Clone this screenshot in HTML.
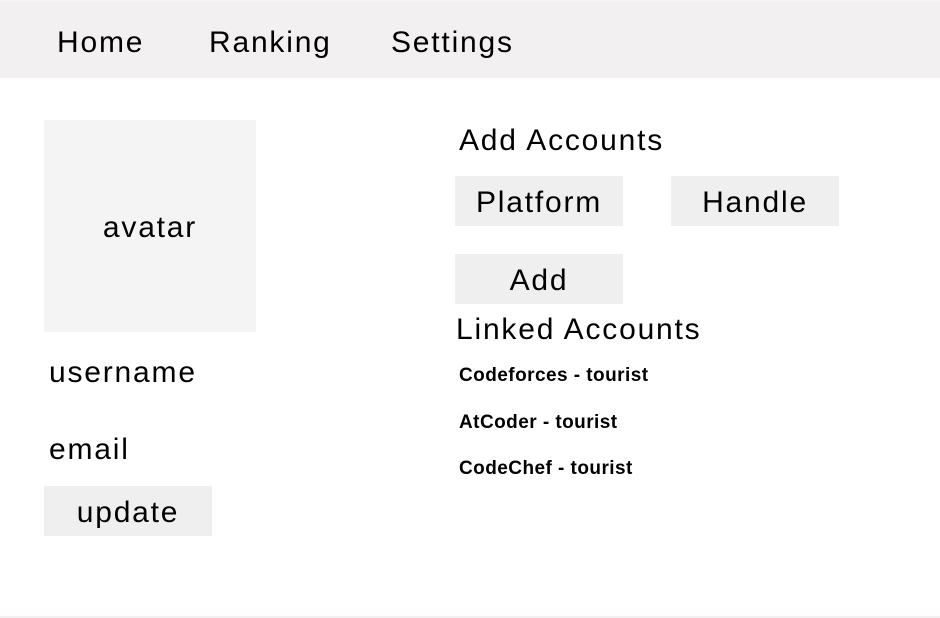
<!DOCTYPE html>
<html><head><style>
body{margin:0;width:940px;height:618px;background:#fff;position:relative;overflow:hidden;font-family:"Liberation Sans",sans-serif;color:#000}
.a{position:absolute;white-space:nowrap}
.nav{position:absolute;left:0;top:0;width:940px;height:78px;background:#f2f0f1;border-top:2px solid #f6f5f5;box-sizing:border-box}
.t{font-size:30px;line-height:36px;letter-spacing:1.8px}
.box{position:absolute;background:#f0efef;display:flex;align-items:center;justify-content:center;font-size:30px;letter-spacing:1.8px;padding-top:3px;box-sizing:border-box}
.s{font-size:19px;font-weight:bold;line-height:24px;letter-spacing:0.45px}
</style></head><body>
<div class="nav"></div>
<div class="a t" style="left:57px;top:25px">Home</div>
<div class="a t" style="left:209px;top:25px">Ranking</div>
<div class="a t" style="left:391px;top:25px">Settings</div>
<div class="box" style="left:44px;top:120px;width:212px;height:212px;background:#f5f4f4">avatar</div>
<div class="a t" style="left:49px;top:355px">username</div>
<div class="a t" style="left:49px;top:432px">email</div>
<div class="box" style="left:44px;top:486px;width:168px;height:50px">update</div>
<div class="a t" style="left:459px;top:123px">Add Accounts</div>
<div class="box" style="left:455px;top:176px;width:168px;height:50px">Platform</div>
<div class="box" style="left:671px;top:176px;width:168px;height:50px">Handle</div>
<div class="box" style="left:455px;top:254px;width:168px;height:50px">Add</div>
<div class="a t" style="left:456px;top:312px">Linked Accounts</div>
<div class="a s" style="left:459px;top:364px">Codeforces - tourist</div>
<div class="a s" style="left:459px;top:411px">AtCoder - tourist</div>
<div class="a s" style="left:459px;top:457px">CodeChef - tourist</div>
<div class="a" style="left:0;top:616px;width:940px;height:2px;background:#f2f0f1"></div>
</body></html>
